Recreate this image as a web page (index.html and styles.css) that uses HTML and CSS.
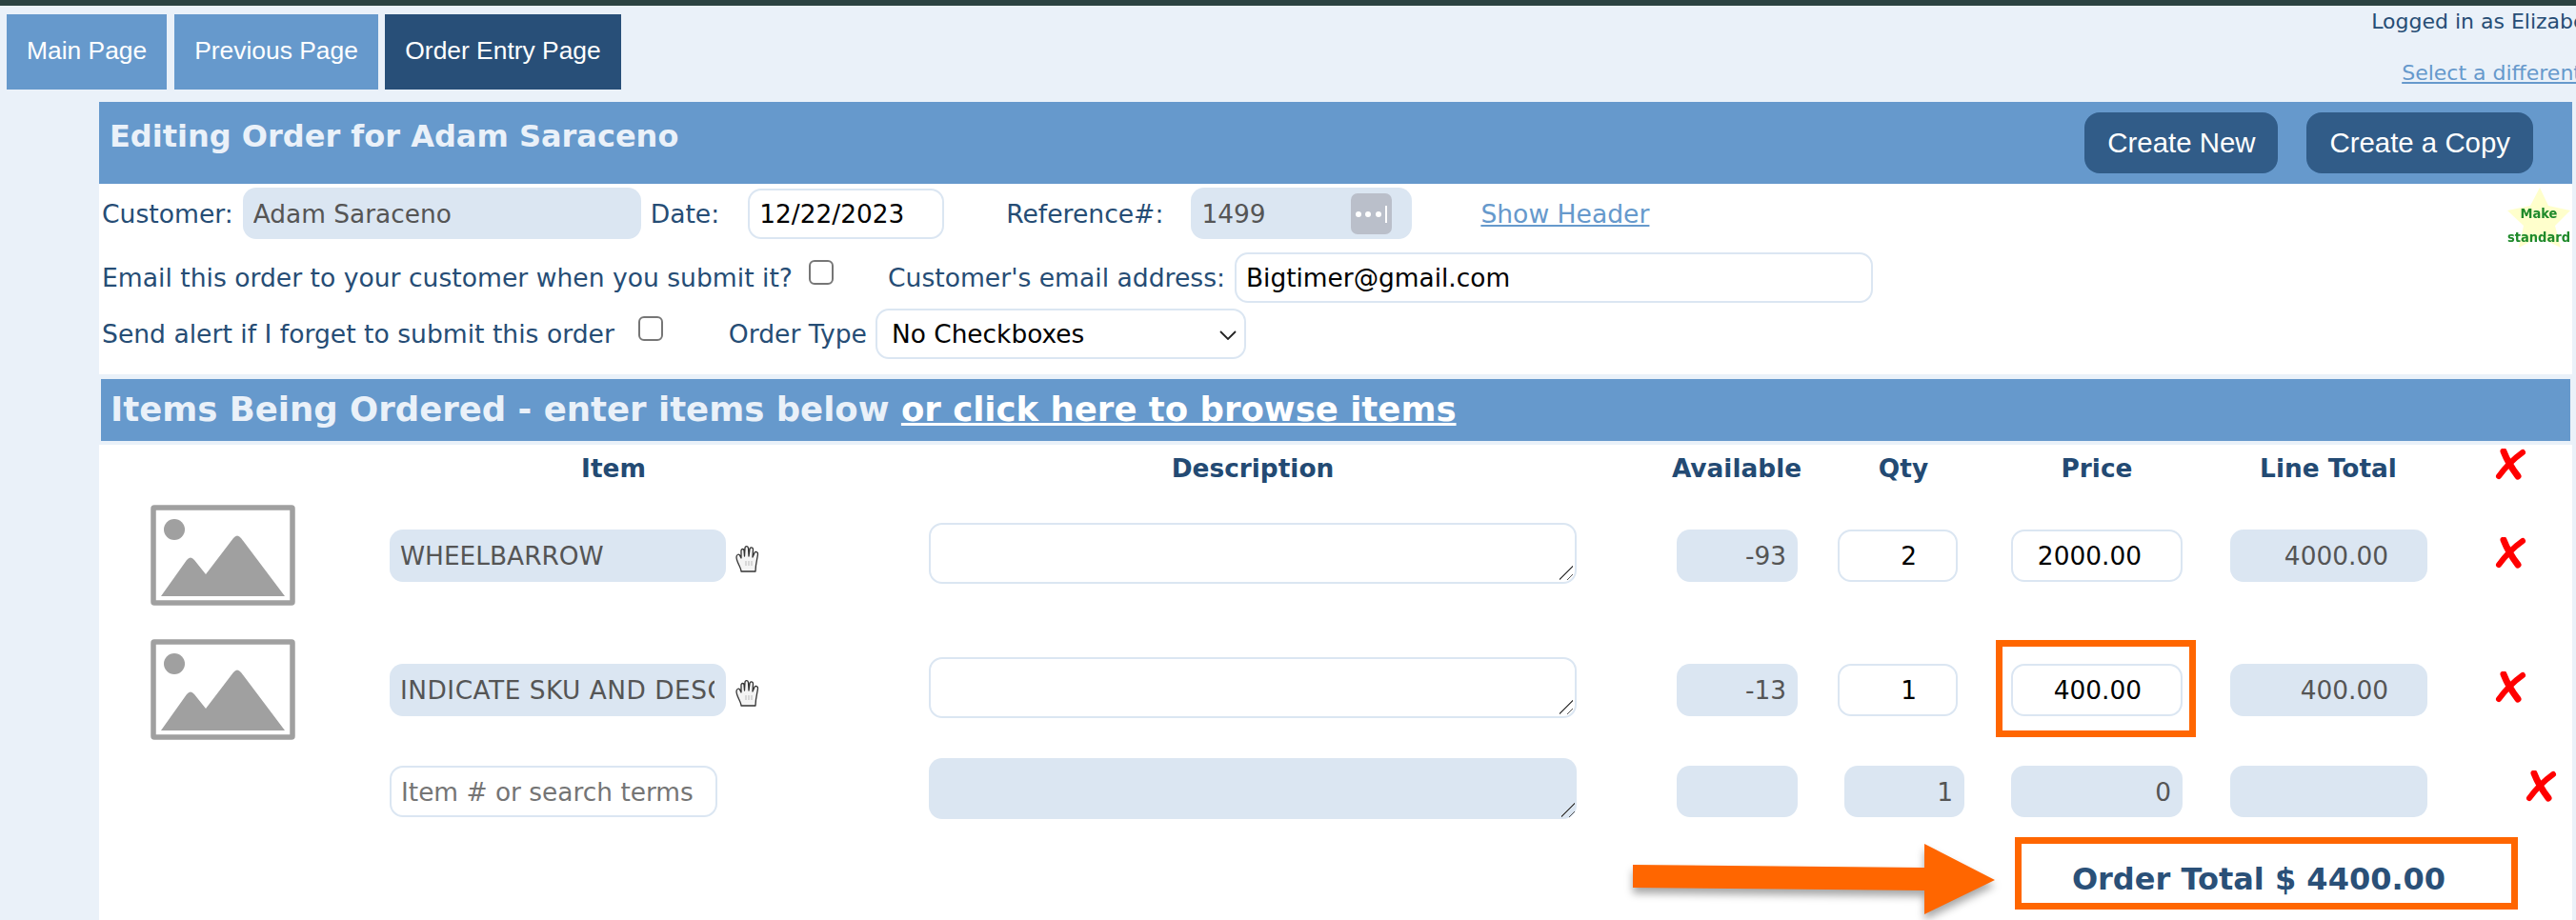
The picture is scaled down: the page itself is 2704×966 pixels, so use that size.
FILE: index.html
```html
<!DOCTYPE html>
<html>
    <head>
        <title>Order Entry</title>
        <link rel="stylesheet" href="styles.css">
    </head>
    <body>
        <div class="topbar"></div>
        <div class="nav">
            <a class="tab">Main Page</a>
            <a class="tab">Previous Page</a>
            <a class="tab tab-active">Order Entry Page</a>
            <div class="login">
                <div>Logged in as Elizabeth Saraceno</div>
                <a class="login-link">Select a different company</a>
            </div>
        </div>

        <div class="main">
            <div class="panel-head">
                <h1>Editing Order for Adam Saraceno</h1>
                <div class="head-buttons">
                    <button>Create New</button>
                    <button>Create a Copy</button>
                </div>
            </div>

            <div class="form-area">
                <div class="form-row row-customer">
                    <label>Customer:</label>
                    <input class="field filled customer-input" type="text" value="Adam Saraceno">
                    <label class="date-label">Date:</label>
                    <input class="field date-input" type="text" value="12/22/2023">
                    <label class="ref-label">Reference#:</label>
                    <div class="ref-box">
                        <input class="ref-input" type="text" value="1499">
                        <svg class="key-icon" width="43" height="43" viewBox="0 0 43 43">
                            <rect width="43" height="43" rx="7" fill="#babfca"/>
                            <circle cx="8" cy="22" r="3" fill="#fff"/>
                            <circle cx="18" cy="22" r="3" fill="#fff"/>
                            <circle cx="29" cy="22" r="3" fill="#fff"/>
                            <rect x="36" y="13" width="2" height="18" fill="#fff"/>
                        </svg>
                    </div>
                    <a class="show-header">Show Header</a>
                </div>
                <div class="form-row row-email">
                    <label>Email this order to your customer when you submit it?</label>
                    <input class="check check-email" type="checkbox">
                    <label class="email-label">Customer's email address:</label>
                    <input class="field email-input" type="text" value="Bigtimer@gmail.com">
                </div>
                <div class="form-row row-alert">
                    <label>Send alert if I forget to submit this order</label>
                    <input class="check check-alert" type="checkbox">
                    <label class="type-label">Order Type</label>
                    <div class="select-wrap">
                        <select class="field type-select">
                            <option>No Checkboxes</option>
                        </select>
                        <svg class="chevron" width="18" height="10" viewBox="0 0 18 10">
                            <path d="M1 1l8 8 8-8" fill="none" stroke="#222" stroke-width="1.8"/>
                        </svg>
                    </div>
                </div>

                <div class="star">
                    <svg width="66" height="63" viewBox="0 0 66 63">
                        <polygon points="34,0 43,19 66,24 50,40 56,63 33,52 12,63 17,40 0,24 24,19" fill="#ffffcc"/>
                    </svg>
                    <span class="star-text">Make<br>standard</span>
                </div>
            </div>

            <div class="items-wrap">
                <h2 class="items-head">Items Being Ordered - enter items below <a>or click here to browse items</a></h2>
            </div>

            <div class="items">
                <div class="items-header">
                    <div>Item</div>
                    <div>Description</div>
                    <div>Available</div>
                    <div>Qty</div>
                    <div>Price</div>
                    <div>Line Total</div>
                    <svg class="del" width="33" height="33" viewBox="0 0 33 33"><use href="#del-x"/></svg>
                </div>

                <div class="item-row row-one">
                    <svg class="thumb" width="152" height="106" viewBox="0 0 152 106"><use href="#no-image"/></svg>
                    <input class="field filled" type="text" value="WHEELBARROW">
                    <svg class="hand" width="25" height="30" viewBox="0 0 25 30"><use href="#hand"/></svg>
                    <textarea class="field desc"></textarea>
                    <input class="field filled num" type="text" value="-93">
                    <input class="field num wide-pad" type="text" value="2">
                    <input class="field num wide-pad" type="text" value="2000.00">
                    <input class="field filled num wide-pad" type="text" value="4000.00">
                    <svg class="del" width="33" height="33" viewBox="0 0 33 33"><use href="#del-x"/></svg>
                </div>

                <div class="item-row row-two">
                    <svg class="thumb" width="152" height="106" viewBox="0 0 152 106"><use href="#no-image"/></svg>
                    <input class="field filled long-name" type="text" value="INDICATE SKU AND DESCRIPTION">
                    <svg class="hand" width="25" height="30" viewBox="0 0 25 30"><use href="#hand"/></svg>
                    <textarea class="field desc"></textarea>
                    <input class="field filled num" type="text" value="-13">
                    <input class="field num wide-pad" type="text" value="1">
                    <div class="price-cell">
                        <input class="field num wide-pad" type="text" value="400.00">
                        <div class="highlight"></div>
                    </div>
                    <input class="field filled num wide-pad" type="text" value="400.00">
                    <svg class="del" width="33" height="33" viewBox="0 0 33 33"><use href="#del-x"/></svg>
                </div>

                <div class="item-row row-new">
                    <div></div>
                    <input class="field search" type="text" placeholder="Item # or search terms">
                    <div></div>
                    <textarea class="field filled desc"></textarea>
                    <input class="field filled num" type="text">
                    <input class="field filled num qty-new" type="text" value="1">
                    <input class="field filled num" type="text" value="0">
                    <input class="field filled num" type="text">
                    <svg class="del del-new" width="33" height="33" viewBox="0 0 33 33"><use href="#del-x"/></svg>
                </div>

                <div class="total-row">
                    <svg class="arrow" width="380" height="74" viewBox="0 0 380 74">
                        <polygon points="0,22 306,25 306,0 380,38 306,74 306,49 0,46" fill="#ff6600"/>
                    </svg>
                    <div class="order-total">Order Total $ 4400.00</div>
                </div>
            </div>
        </div>

        <svg class="defs" width="0" height="0">
            <defs>
                <g id="no-image">
                    <rect x="3" y="3" width="146" height="100" rx="1" fill="#fff" stroke="#a0a0a0" stroke-width="5.5"/>
                    <circle cx="25" cy="26" r="11" fill="#a0a0a0"/>
                    <path d="M11 96L38 58Q42 53 46 58L58 73L87 35Q91 30 95 35L141 96Z" fill="#a0a0a0"/>
                </g>
                <g id="del-x">
                    <path d="M9 3Q14 16 24 29" fill="none" stroke="#ff0000" stroke-width="7" stroke-linecap="round"/>
                    <path d="M29 4Q15 14 4 29" fill="none" stroke="#ff0000" stroke-width="6" stroke-linecap="round"/>
                </g>
                <g id="hand">
                    <path d="M6 28C6 24 1 18 1 13C1 10 4 9 5 12L6 14L6 6C6 4 9 4 9 6L9.5 12L10 3.5C10 1 13 1 13.5 3.5L14 12L15 4.5C15.500 2 18.500 2.500 18.500 5L18 13L20 8.500C21 6.500 24 7.500 23.500 10C23 15 21 20 21 28Z" fill="#f4f4f4" stroke="#333" stroke-width="1.300" stroke-linejoin="round"/>
                    <path d="M11 17v5M14 17v5M17 17v5" stroke="#bbb" stroke-width="1"/>
                </g>
            </defs>
        </svg>
    </body>
</html>
```

FILE: styles.css
```css
body{
    font-family: "DejaVu Sans", sans-serif;
    font-size: 26.6px;
    margin: 0;
    height: 966px;
    overflow: hidden;
    background: #eaf1f9;
    color: #264d75;
}
.topbar{
    height: 6px;
    background: #2c4342;
}
.defs{
    position: absolute;
}

/* top tabs */
.nav{
    display: flex;
    align-items: flex-start;
    height: 101px;
    padding-left: 7px;
    white-space: nowrap;
}
.tab{
    margin-top: 9px;
    margin-right: 8px;
    padding: 0 21px;
    height: 79px;
    line-height: 76px;
    background: #6699cc;
    color: #fff;
    font-family: "Liberation Sans", Arial, sans-serif;
    font-size: 26.4px;
}
.tab-active{
    margin-left: -1px;
    padding: 0 21.5px;
    background: #284f78;
}
.login{
    margin-left: 1829px;
    margin-top: 3px;
    font-size: 22px;
    line-height: 28px;
}
.login-link{
    display: block;
    margin: 26px 0 0 32px;
    color: #6699cc;
    text-decoration: underline;
}

/* main panel */
.main{
    margin-left: 104px;
    width: 2596px;
    height: 859px;
    background: #fff;
}
.panel-head{
    display: flex;
    justify-content: space-between;
    align-items: center;
    height: 86px;
    background: #6699cc;
}
h1{
    margin: -14px 0 0 11px;
    font-size: 32px;
    color: #eaf1f9;
}
.head-buttons{
    display: flex;
    gap: 30px;
    padding-right: 41px;
}
button{
    height: 64px;
    padding: 0 24px;
    border: none;
    border-radius: 16px;
    background: #315c88;
    color: #fff;
    font-family: "Liberation Sans", Arial, sans-serif;
    font-size: 29.4px;
}

/* inputs */
.field{
    box-sizing: border-box;
    height: 55px;
    padding: 0 12px 0 10px;
    border: 2px solid #dbe6f2;
    border-radius: 14px;
    background: #fff;
    color: #000;
    font-family: "DejaVu Sans", sans-serif;
    font-size: 26.4px;
    outline: none;
}
.filled{
    border: none;
    padding-left: 11px;
    background: #dbe6f2;
    color: #555;
}
.check{
    appearance: none;
    box-sizing: border-box;
    width: 26px;
    height: 26px;
    margin: 0;
    border: 2px solid #767676;
    border-radius: 6px;
    background: #fff;
}

/* customer form */
.form-area{
    position: relative;
    height: 200px;
    padding-top: 4px;
    box-sizing: border-box;
}
.form-row{
    display: flex;
    align-items: center;
    padding-left: 3px;
    white-space: nowrap;
}
.row-customer{
    height: 54px;
}
.row-email{
    height: 53px;
    margin-top: 14px;
}
.row-alert{
    height: 53px;
    margin-top: 6px;
}
.customer-input{
    width: 418px;
    height: 54px;
    margin-left: 10px;
}
.date-label{
    margin-left: 10px;
}
.date-input{
    width: 206px;
    height: 53px;
    margin-left: 30px;
}
.ref-label{
    margin-left: 65px;
}
.ref-box{
    display: flex;
    align-items: center;
    width: 232px;
    height: 54px;
    margin-left: 29px;
    border-radius: 14px;
    background: #dbe6f2;
}
.ref-input{
    width: 168px;
    padding: 0 0 0 11px;
    border: none;
    background: transparent;
    color: #555;
    font-family: "DejaVu Sans", sans-serif;
    font-size: 26.4px;
    outline: none;
    box-sizing: border-box;
}
.show-header{
    margin-left: 72px;
    color: #6699cc;
    text-decoration: underline;
}
.check-email{
    margin: -11px 0 0 17px;
}
.email-label{
    margin-left: 57px;
}
.email-input{
    width: 670px;
    height: 53px;
    margin-left: 10px;
}
.check-alert{
    margin: -12px 0 0 25px;
}
.type-label{
    margin-left: 69px;
}
.select-wrap{
    position: relative;
    margin-left: 9px;
}
.type-select{
    appearance: none;
    display: block;
    width: 389px;
    height: 53px;
    padding-left: 15px;
}
.chevron{
    position: absolute;
    right: 10px;
    top: 23px;
    pointer-events: none;
}
.star{
    position: absolute;
    top: 4px;
    right: 2px;
    width: 66px;
    height: 63px;
}
.star-text{
    position: absolute;
    top: 15px;
    left: 0;
    width: 66px;
    text-align: center;
    font-family: "DejaVu Sans Condensed", "DejaVu Sans", sans-serif;
    font-size: 14.5px;
    line-height: 25px;
    font-weight: bold;
    color: #1f8a2b;
    filter: blur(0.5px);
}

/* items */
.items-wrap{
    padding: 5px 2px 4px;
    background: #eaf1f9;
}
.items-head{
    margin: 0;
    height: 65px;
    padding-left: 10px;
    line-height: 64px;
    background: #6699cc;
    color: #eaf1f9;
    font-size: 35.5px;
    white-space: nowrap;
}
.items-head a{
    color: #fff;
    text-decoration: underline;
}
.items-header{
    display: grid;
    grid-template-columns: 470px 872px 144px 206px 200px 286px 65px;
    align-items: center;
    height: 63px;
    padding-left: 305px;
    box-sizing: border-box;
    font-weight: bold;
    font-size: 26.4px;
    text-align: center;
    color: #234a73;
}
.items-header div{
    margin-bottom: 14px;
}
.items-header .del{
    justify-self: end;
    margin-bottom: 22px;
}
.item-row{
    display: grid;
    grid-template-columns: 206px 452px 35px 858px 232px 168px 236px 257px 104px;
    align-items: center;
    justify-items: end;
}
.row-two{
    margin-top: 35px;
}
.row-new{
    height: 64px;
    margin-top: 19px;
}
.item-row .field{
    width: 100%;
}
.item-row > .field:nth-child(2){
    width: 353px;
}
.item-row > .long-name{
    letter-spacing: 0.5px;
}
.item-row > .field:nth-child(5){
    width: 127px;
}
.item-row > .field:nth-child(6){
    width: 126px;
}
.item-row > .field:nth-child(7),
.price-cell{
    width: 180px;
}
.item-row > .field:nth-child(8){
    width: 207px;
}
.item-row > .desc{
    width: 680px;
    height: 64px;
    margin-bottom: 5px;
    resize: none;
    /* the two diagonal lines of the resize grip */
    background-image:
        linear-gradient(135deg, transparent 46%, #555 46% 54%, transparent 54%),
        linear-gradient(135deg, transparent 44%, #555 44% 56%, transparent 56%);
    background-repeat: no-repeat;
    background-size: 14px 15px, 6px 6px;
    background-position: right 2px bottom 2px, right 2px bottom 2px;
}
.row-new > .desc{
    margin-bottom: 0;
}
.hand{
    margin-top: 7px;
}
.num{
    text-align: right;
}
.wide-pad{
    padding-right: 41px;
}
.del{
    filter: blur(0.4px);
}
.item-row .del{
    margin-bottom: 6px;
}
.item-row > .search:nth-child(2){
    justify-self: start;
    width: 344px;
    margin-left: 99px;
    margin-top: 6px;
    height: 54px;
}
.search::placeholder{
    color: #757575;
}
.row-new > .num{
    margin-top: 6px;
    height: 54px;
}
.item-row > .qty-new{
    margin-right: -7px;
}
.item-row .del-new{
    margin-right: -32px;
}
.price-cell{
    position: relative;
}
.price-cell .field{
    display: block;
    width: 100%;
}
.highlight{
    position: absolute;
    top: -25px;
    bottom: -22px;
    left: -16px;
    right: -14px;
    border: 7px solid #ff6600;
}
.total-row{
    display: flex;
    justify-content: flex-end;
    align-items: flex-start;
    gap: 21px;
    margin-top: 19px;
    padding-right: 57px;
}
.arrow{
    margin-top: 7px;
    overflow: visible;
    filter: drop-shadow(0 6px 4px rgba(0, 0, 0, 0.35));
}
.order-total{
    box-sizing: border-box;
    width: 528px;
    height: 76px;
    padding-right: 16px;
    line-height: 75px;
    border: 7px solid #ff6600;
    text-align: center;
    font-weight: bold;
    font-size: 32px;
    color: #2a5078;
}
```
